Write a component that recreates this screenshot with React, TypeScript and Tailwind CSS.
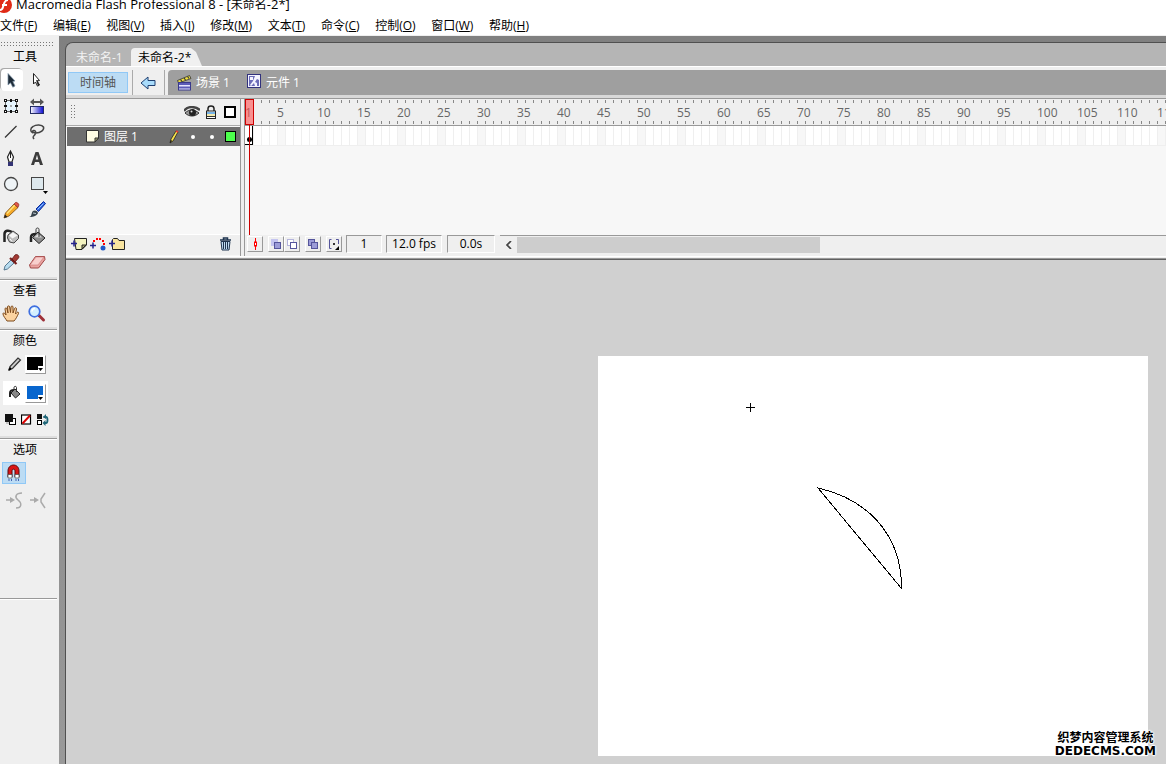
import React, { useState } from 'react';

const MENUS = [
  ['文件', 'F'],
  ['编辑', 'E'],
  ['视图', 'V'],
  ['插入', 'I'],
  ['修改', 'M'],
  ['文本', 'T'],
  ['命令', 'C'],
  ['控制', 'O'],
  ['窗口', 'W'],
  ['帮助', 'H'],
];

// Frames are 8px wide, the timeline starts after the toolbox and the layer list
const FRAME_COUNT = Math.ceil((window.innerWidth - 245) / 8);
const FRAMES = Array.from({ length: FRAME_COUNT }, (_, i) => i + 1);

interface Tool {
  name: string;
  icon: React.ReactNode;
}

const TOOLS: Tool[] = [
  {
    name: '选择工具',
    icon: <path d="M7 4.500l7 7.500-2.200.4L14 17l-2.200 1.200-2.300-4.400L7 16z" fill="#1f2c38" stroke="#7c93a8" strokeWidth=".7" />,
  },
  {
    name: '部分选取工具',
    icon: (
      <>
        <path d="M6.500 4.500l6 7-2.300.5 2.300 4-2 1.200-2-4.200-2 2z" fill="#fff" stroke="#222" />
        <path d="M9 11l3 .8-1.600.4 2.100 3.800-1.500 1z" fill="#222" />
      </>
    ),
  },
  {
    name: '任意变形工具',
    icon: (
      <>
        <rect x="4.500" y="5.500" width="11" height="11" fill="#e6f4fd" stroke="#666" />
        <path
          d="M3 4h3v3H3zM9 4h2v3H9zM14 4h3v3h-3zM3 10h3v2H3zM14 10h3v2h-3zM3 15h3v3H3zM9 15h2v3H9zM14 15h3v3h-3z"
          fill="#111"
        />
        <path d="M4 5h1v1H4zM15 5h1v1h-1zM4 16h1v1H4zM15 16h1v1h-1z" fill="#fff" />
        <path d="M9 10h2v2H9z" fill="#aaa" />
      </>
    ),
  },
  {
    name: '填充变形工具',
    icon: (
      <>
        <defs>
          <linearGradient id="fillBar">
            <stop offset="0" stopColor="#fff" />
            <stop offset="1" stopColor="#0a0ad0" />
          </linearGradient>
        </defs>
        <path d="M3 7l4-3.500V6h6V3.500L17 7l-4 3.500V8H7v2.500z" fill="#555" />
        <rect x="3.500" y="11.500" width="13" height="7" fill="url(#fillBar)" stroke="#222a66" />
      </>
    ),
  },
  { name: '线条工具', icon: <path d="M4 16.500L15.500 5" stroke="#333" strokeWidth="1.300" /> },
  {
    name: '套索工具',
    icon: (
      <path
        d="M6 12C3 11 3 7 6 5.500 9 3.500 15 3.500 16.500 6c1 3-3 6-7.500 6-3 0-4.500-2-2.500-2.500s3 2 1.500 4-3 2-1 4.500"
        fill="none"
        stroke="#444"
        strokeWidth="1.500"
      />
    ),
  },
  {
    name: '钢笔工具',
    icon: (
      <>
        <path d="M9.500 4L6.500 10l1.500 5h3l1.500-5z" fill="#fff" stroke="#222" strokeWidth="1.200" />
        <path d="M9.500 4v7" stroke="#222" />
        <rect x="7" y="15" width="5" height="4" fill="#343474" />
      </>
    ),
  },
  {
    name: '文本工具',
    icon: <path d="M4 18L8.500 5h3L16 18h-3l-1-3H8l-1 3zM8.700 12.500h2.600L10 8z" fill="#3c3c3c" fillRule="evenodd" />,
  },
  { name: '椭圆工具', icon: <circle cx="10" cy="11" r="6.500" fill="#eef3f6" stroke="#444" strokeWidth="1.300" /> },
  {
    name: '矩形工具',
    icon: (
      <>
        <rect x="4.500" y="4.500" width="12" height="12" fill="#dde8ed" stroke="#444" />
        <path d="M16 18h5l-2.500 3z" fill="#000" />
      </>
    ),
  },
  {
    name: '铅笔工具',
    icon: (
      <>
        <path d="M3 19l1.500-5L13 5l4 3.500L8 17z" fill="#f5a927" stroke="#7a4a10" strokeWidth=".8" />
        <path d="M6 14.500l8-8.500" stroke="#ffe27a" strokeWidth="1.500" />
        <path d="M13 5l1.500-1.500c1-.8 4 1.500 3.300 2.700L17 8.500z" fill="#e2574a" stroke="#8a2a20" strokeWidth=".7" />
        <path d="M3 19l1-3.500 2.500 2.500z" fill="#222" />
      </>
    ),
  },
  {
    name: '刷子工具',
    icon: (
      <>
        <path d="M9 10l7.500-7.500 2 2L11.500 12.500z" fill="#2b66e0" stroke="#0c2b99" />
        <path d="M10.500 10.500l6-6" stroke="#9cc4ff" />
        <path d="M2 18c3 0 2-4 4-6 2-1.500 5 0 5 2-1 3-6 4.500-9 4z" fill="#37434d" />
        <path d="M6 14l3 .5" stroke="#b8c4cc" />
      </>
    ),
  },
  {
    name: '墨水瓶工具',
    icon: (
      <>
        <path d="M3.500 17V9C3.500 5 8 5 11 7" fill="none" stroke="#222" strokeWidth="2.500" />
        <path d="M7 10l5-4 5.500 4v3.500L13 18l-4.500-1-2-4z" fill="#bdbdbd" stroke="#444" />
        <path d="M8 10.500l4-3 4.500 3-5 3z" fill="#f5f5f5" />
        <path d="M9 14l2 2.500" stroke="#fff" />
      </>
    ),
  },
  {
    name: '颜料桶工具',
    icon: (
      <>
        <path d="M4 17v-5c0-2 2-3 5-3" fill="none" stroke="#222" strokeWidth="2.500" />
        <path d="M5.500 12.500L11 7l7 6-6 5.500z" fill="#8f8f8f" stroke="#222" />
        <path d="M7.500 12.300L11 9l4 3.500z" fill="#ddd" />
        <path d="M9 9V4.500c0-2 3-2 3 0V12" fill="none" stroke="#333" />
      </>
    ),
  },
  {
    name: '滴管工具',
    icon: (
      <>
        <path d="M3 19l1-4 6-6 3 3-6.500 6z" fill="#b7dcef" stroke="#4a6c86" strokeWidth=".9" />
        <path d="M9 7l6.500 6" stroke="#7a1f1c" strokeWidth="2.200" />
        <path d="M11 8l3-4c2-1.500 5 1 3.500 3L14 11z" fill="#a33a34" stroke="#5c1512" strokeWidth=".8" />
      </>
    ),
  },
  {
    name: '橡皮擦工具',
    icon: (
      <>
        <path d="M2.500 14l6-8.500h9l.5 3-6.500 8.500h-8z" fill="#e9a3a0" stroke="#a04848" />
        <path d="M3 14l6-8h8l-6 8z" fill="#f8cfcd" stroke="#c77" strokeWidth=".6" />
      </>
    ),
  },
];

function Separator() {
  return (
    <div className="w-[57px]">
      <div className="h-0.5 bg-[#dedede]" />
      <div className="h-px bg-[#999]" />
      <div className="h-px bg-white" />
    </div>
  );
}

function ToolIcon({ children }: { children: React.ReactNode }) {
  return (
    <svg width="22" height="22" viewBox="0 0 22 22" fill="none">
      {children}
    </svg>
  );
}

function Swatch({ label, color }: { label: string; color: string }) {
  return (
    <button aria-label={label} className="h-[19px] w-[21px] border border-t-white border-l-white border-r-[#999] border-b-[#999]">
      <svg width="19" height="17" viewBox="0 0 19 17">
        <rect width="19" height="17" fill="#fff" />
        <rect x="1" y="1" width="16" height="13" fill={color} />
        <path d="M12 10h7v7h-7z" fill="#fff" />
        <path d="M12 12h5l-2.500 3z" fill="#000" />
      </svg>
    </button>
  );
}

function Toolbox() {
  const [tool, setTool] = useState('选择工具');

  return (
    <aside className="flex w-[59px] shrink-0 flex-col bg-[#efefef]">
      <div className="mt-[5px] h-[5px] w-[54px] bg-[radial-gradient(#777_35%,transparent_40%)] bg-[length:3px_3px]" />
      <h2 className="w-[50px] pt-[2px] pb-px text-center leading-[18px]">工具</h2>
      <div className="grid w-[52px] grid-cols-2 pl-px">
        {TOOLS.map(({ name, icon }) => (
          <button
            key={name}
            aria-label={name}
            onClick={() => setTool(name)}
            className={`my-0.5 h-[22px] w-[22px] ${tool === name ? 'rounded-sm bg-white shadow-[-1px_-1px_0_#aaa]' : ''}`}
          >
            <ToolIcon>{icon}</ToolIcon>
          </button>
        ))}
      </div>

      <div className="mt-0.5">
        <Separator />
      </div>
      <h2 className="w-[50px] text-center leading-[20px]">查看</h2>
      <div className="mt-0.5 grid w-[52px] grid-cols-2 pl-px">
        <button aria-label="手形工具" className="h-[22px] w-[22px]">
          <ToolIcon>
            <path
              d="M6 18c-1-2-4-5-4-7s2-1 3 1L4 6c0-1.500 1.700-1.500 2 0l1 4-.5-6c0-1.500 2-1.500 2.200 0L9.500 9.500 10 4c.2-1.500 2-1.300 2 0v6l1.500-4.500c.5-1.300 2.200-.8 2 .5L14.500 11l1.500-1.500c1-1 2 0 1.500 1-1 2-2.500 5.500-4.500 7.500z"
              fill="#fbd3a0"
              stroke="#7d4a1c"
            />
          </ToolIcon>
        </button>
        <button aria-label="缩放工具" className="h-[22px] w-[22px]">
          <ToolIcon>
            <path d="M12 12.500l4.500 4.500" stroke="#9e3038" strokeWidth="3" strokeLinecap="round" />
            <circle cx="7.500" cy="8.500" r="5.300" fill="#d3f0ff" stroke="#3f6fe0" strokeWidth="1.700" />
            <path d="M5 8.500c0-2 1-3 3-3" stroke="#fff" strokeWidth="1.500" />
          </ToolIcon>
        </button>
      </div>

      <div className="mt-0.5">
        <Separator />
      </div>
      <h2 className="w-[50px] text-center leading-[20px]">颜色</h2>
      <div className="mt-px flex h-6 items-center pl-[5px]">
        <svg width="20" height="20" viewBox="0 0 20 20" className="shrink-0">
          <path d="M4 16l1-3.500 8-8.500 2.500 2L7.500 14.500z" fill="#ccc" stroke="#333" strokeWidth="1.200" />
          <path d="M4 16l2-2" stroke="#000" strokeWidth="2" />
        </svg>
        <Swatch label="笔触颜色" color="#000" />
      </div>
      <div className="mt-[5px] ml-[3px] flex h-6 w-[45px] items-center bg-white pl-0.5">
        <svg width="20" height="20" viewBox="0 0 20 20" className="shrink-0">
          <path d="M5 14v-4c0-2 2-3 4-3" fill="none" stroke="#222" strokeWidth="2" />
          <path d="M6 10l4-4 5 5-4.500 4z" fill="#888" stroke="#222" />
          <path d="M9 7V4.500c0-1.500 2.500-1.500 2.500 0V9" fill="none" stroke="#333" />
        </svg>
        <Swatch label="填充颜色" color="#0866ce" />
      </div>
      <div className="mt-[7px] flex h-4 items-center gap-1 pl-[5px]">
        <button aria-label="黑白" className="h-3 w-3">
          <svg width="12" height="12" viewBox="0 0 12 12">
            <rect x="4.500" y="4.500" width="6" height="6" fill="#fff" stroke="#000" />
            <rect width="8" height="8" fill="#111" />
            <path d="M1 9h3" stroke="#999" />
          </svg>
        </button>
        <button aria-label="没有颜色" className="h-3 w-3">
          <svg width="12" height="12" viewBox="0 0 12 12">
            <rect x=".5" y="1" width="9" height="9" fill="#fff" stroke="#000" strokeWidth="1.200" />
            <path d="M1.500 9.500L9 1.500" stroke="#d00" strokeWidth="2" />
          </svg>
        </button>
        <button aria-label="交换颜色" className="h-3 w-3">
          <svg width="12" height="12" viewBox="0 0 12 12">
            <rect width="5" height="5" fill="#111" />
            <rect x=".5" y="6.500" width="4" height="4" fill="#fff" stroke="#000" />
            <path d="M6.500 3H9c2 0 2 6 0 6H7" fill="none" stroke="#1f6678" strokeWidth="1.800" />
            <path d="M6 3l3-3v5zM5.500 9l3-3v6z" fill="#1f6678" />
          </svg>
        </button>
      </div>

      <div className="mt-2">
        <Separator />
      </div>
      <h2 className="w-[50px] text-center leading-[20px]">选项</h2>
      <button aria-label="贴紧至对象" className="mt-[2px] ml-[2px] h-[22px] w-6 border border-[#90c8f6] bg-[#bcdcf4]">
        <svg width="22" height="20" viewBox="0 0 22 20">
          <path d="M5 14V8c0-8 11-8 11 0v6h-4V8c0-2.500-3-2.500-3 0v6z" fill="#d81616" stroke="#5c0808" />
          <path d="M5 11.500h4V15H5zM12 11.500h4V15h-4z" fill="#fff" stroke="#444" strokeWidth=".7" />
          <path d="M5.500 17h1M8 17h1M12.500 17h1M15 17h1" stroke="#1c3c9c" strokeWidth="1.500" />
        </svg>
      </button>
      <div className="mt-2 flex gap-2 pl-[6px]">
        <button aria-label="平滑" disabled>
          <svg width="16" height="18" viewBox="0 0 16 18">
            <path d="M0 8h5" stroke="#aaa" strokeWidth="1.500" />
            <path d="M4 5l5 3-5 3z" fill="#aaa" />
            <path d="M16 1c-6 0-8 4-4 7s4 8-2 8" fill="none" stroke="#aaa" strokeWidth="1.500" />
          </svg>
        </button>
        <button aria-label="伸直" disabled>
          <svg width="16" height="18" viewBox="0 0 16 18">
            <path d="M0 8h5" stroke="#aaa" strokeWidth="1.500" />
            <path d="M4 5l5 3-5 3z" fill="#aaa" />
            <path d="M15 1l-4 6v3l4 6" fill="none" stroke="#aaa" strokeWidth="1.500" />
          </svg>
        </button>
      </div>
      <div className="mt-[88px] w-[57px] border-t border-b border-t-[#999] border-b-white" />
    </aside>
  );
}

function TabBar() {
  return (
    <div className="flex h-6 items-end border-b border-white bg-[#b5b5b5]">
      <button className="h-[17px] w-[65px] pl-[10px] text-left leading-[16px] text-[#f3f3f3]">未命名-1</button>
      <button className="h-[18px] w-[71px] rounded-tl-sm bg-[#f0f0f0] pl-[7px] text-left leading-[17px] text-black [clip-path:polygon(0_0,60px_0,65px_4px,71px_100%,0_100%)]">
        未命名-2*
      </button>
    </div>
  );
}

function EditBar() {
  return (
    <div className="flex h-7 bg-[#efefef] pl-[2px] text-[12px]">
      <button className="mt-[5px] h-[21px] w-[60px] border border-[#90c8f6] bg-[#bcdcf4] pt-px text-[#555]">时间轴</button>
      <div className="mt-[3px] ml-1 w-px bg-[#aaa]" />
      <button aria-label="返回" className="w-[31px] pl-[7px]">
        <svg width="17" height="16" viewBox="0 0 17 16" className="mt-[3px]">
          <path d="M1 8l7-6v3.500h7v5H8V14z" fill="#a9dcfb" stroke="#1f3f70" />
        </svg>
      </button>
      <div className="mt-[3px] w-px bg-[#aaa]" />
      <nav className="mt-[3px] ml-[3px] flex flex-1 items-center rounded-tl bg-[#9f9f9f] pl-[9px] text-white">
        <button className="flex items-center gap-1">
          <svg width="15" height="16" viewBox="0 0 15 16">
            <path d="M.5 5.500l12-5 1.500 3L1.500 8z" fill="#f0e040" stroke="#333" strokeWidth=".8" />
            <path d="M3.500 4.500l1.500 2M7 3l1.500 2M10.500 1.500l1.500 2" stroke="#333" strokeWidth="1.200" />
            <rect x="1.500" y="7.500" width="12" height="7.500" fill="#e4e4ff" stroke="#39398c" />
            <path d="M2 9h11M2 12.500h11" stroke="#5c5cb8" strokeWidth="2" />
          </svg>
          <span className="pt-px">场景 1</span>
        </button>
        <button className="ml-[17px] flex items-center gap-1">
          <svg width="15" height="15" viewBox="0 0 15 15" className="-mt-0.5">
            <rect x=".5" y=".5" width="13" height="13" fill="#f4f4ff" stroke="#31317c" />
            <rect x="2" y="2" width="10" height="10" fill="#6c6cb8" />
            <path d="M3 3h3v3H3zM8 2h4v4l-2-1-2 3 2 1v3H8L7 9l-3 3-1-1 3-4z" fill="#f4f4ff" />
          </svg>
          <span className="pt-px">元件 1</span>
        </button>
      </nav>
    </div>
  );
}

function LayerPanel() {
  return (
    <section className="flex w-[175px] shrink-0 flex-col border-r border-[#999] bg-[#f7f7f7]">
      <div className="flex h-[27px] items-center border-b border-[#aaa] bg-[#efefef] pr-px pl-1">
        <div className="h-4 w-[5px] bg-[radial-gradient(#777_35%,transparent_40%)] bg-[length:3px_3px]" />
        <div className="flex-1" />
        <button aria-label="显示/隐藏所有图层" className="flex w-[19px] justify-center">
          <svg width="16" height="12" viewBox="0 0 16 12">
            <path d="M0 5c3-5 11-5 16-1" fill="none" stroke="#444" strokeWidth="2.500" />
            <path d="M1 7c4-4 9-4 14 0-4 4-10 4-14 0z" fill="#999" stroke="#333" />
            <circle cx="8.500" cy="6.500" r="3.500" fill="#222" />
            <circle cx="7.500" cy="5.500" r="1" fill="#ddd" />
          </svg>
        </button>
        <button aria-label="锁定所有图层" className="flex w-[19px] justify-center">
          <svg width="12" height="14" viewBox="0 0 12 14">
            <path d="M3 7V3.500c0-3.500 6-3.500 6 0V7" fill="none" stroke="#222" strokeWidth="1.500" />
            <rect x="1.500" y="6" width="9" height="7.500" fill="#fff" stroke="#222" />
            <path d="M2 8h8" stroke="#4a9be0" strokeWidth="1.500" />
            <path d="M2 10h8" stroke="#e8d45a" />
            <path d="M2 11.500h8" stroke="#333" />
          </svg>
        </button>
        <button aria-label="显示所有图层的轮廓" className="flex w-[19px] justify-center">
          <span className="h-3 w-3 border-2 border-black bg-white" />
        </button>
      </div>
      <div className="ml-px h-[108px]">
        <div className="mt-px flex h-[19px] items-center bg-[#6e6e6e] pl-[19px] text-[12px] text-white">
          <svg width="14" height="13" viewBox="0 0 14 13" className="mr-1">
            <path d="M.5.500h12V8L9 12H.500z" fill="#fffde4" stroke="#333" />
            <path d="M12.500 8L9 12V8z" fill="#a8a870" stroke="#333" />
          </svg>
          图层 1
          <div className="flex-1" />
          <svg width="10" height="14" viewBox="0 0 10 14" className="mr-1">
            <path d="M1 13l1-4 5-8 2 1-5 9z" fill="#f7e04b" stroke="#222" strokeWidth=".8" />
            <path d="M1 13l1-3 1 1z" fill="#000" />
            <path d="M7 1l2 1" stroke="#e33" strokeWidth="1.500" />
          </svg>
          <span className="flex w-[19px] justify-center">
            <span className="h-1 w-1 rounded-full bg-white" />
          </span>
          <span className="flex w-[19px] justify-center">
            <span className="h-1 w-1 rounded-full bg-white" />
          </span>
          <span className="flex w-[19px] justify-center">
            <span className="h-[11px] w-[11px] border border-black bg-[#4cff4c]" />
          </span>
        </div>
      </div>
      <div className="flex h-[21px] items-center gap-[3px] border-t border-white bg-[#efefef] px-[5px] pb-[2px]">
        <button aria-label="插入图层">
          <svg width="16" height="14" viewBox="0 0 16 14">
            <path d="M3.500 1.500h12V8L11 12.500H5z" fill="#f2f2c0" stroke="#222" />
            <path d="M15 8l-4 4V8z" fill="#a8a870" stroke="#222" />
            <path d="M0 6.500h6M3 3.500v6" stroke="#23238c" strokeWidth="1.500" />
          </svg>
        </button>
        <button aria-label="添加运动引导层">
          <svg width="16" height="14" viewBox="0 0 16 14">
            <path d="M3 3h2v2H3zM6 1h2v2H6zM9 1h2v2H9zM12 3h2v2h-2zM13 6h2v2h-2z" fill="#f00" />
            <circle cx="13" cy="11" r="2.500" fill="#1d57c8" />
            <path d="M0 8.500h6M3 5.500v6" stroke="#23238c" strokeWidth="1.500" />
          </svg>
        </button>
        <button aria-label="插入图层文件夹">
          <svg width="16" height="14" viewBox="0 0 16 14">
            <path d="M3.500 12.500v-10l1-1h4l1.500 2h5.500v9z" fill="#f8e4a0" stroke="#222" />
            <path d="M0 6.500h6M3 3.500v6" stroke="#23238c" strokeWidth="1.500" />
          </svg>
        </button>
        <div className="flex-1" />
        <button aria-label="删除图层" className="mr-[3px]">
          <svg width="13" height="14" viewBox="0 0 13 14">
            <path d="M1 3h11M4.500 2.500V1h4v1.500" fill="none" stroke="#1f3550" strokeWidth="1.500" />
            <path d="M2 4.500h9l-1 8.500H3z" fill="#c0dcf4" stroke="#1f3550" />
            <path d="M4.500 5v7M6.500 5v7M8.500 5v7" stroke="#1f3550" />
          </svg>
        </button>
      </div>
    </section>
  );
}

const controlButton =
  'flex h-4 w-4 shrink-0 items-center justify-center border border-t-white border-l-white border-r-[#999] border-b-[#999]';
const controlField =
  'h-[18px] shrink-0 border border-t-[#999] border-l-[#999] border-r-white border-b-white bg-[#efefef] text-center text-[12px] text-black';

function FrameControls() {
  return (
    <div className="flex h-[21px] items-start bg-[#efefef] pl-[2px]">
      <div className="flex shrink-0 pt-px">
        <button aria-label="滚动到播放头" className={controlButton}>
          <svg width="14" height="14" viewBox="0 0 14 14">
            <path d="M7.500 1v12" stroke="#f00" />
            <rect x="6.500" y="5" width="2" height="4" fill="#fff" stroke="#f00" />
          </svg>
        </button>
        <button aria-label="绘图纸外观" className={`${controlButton} ml-[5px]`}>
          <svg width="14" height="14" viewBox="0 0 14 14">
            <rect x="2" y="2" width="7" height="7" fill="#c4c4f0" />
            <rect x="5.500" y="5.500" width="6" height="6" fill="#9c9cd8" stroke="#55559c" />
          </svg>
        </button>
        <button aria-label="绘图纸外观轮廓" className={controlButton}>
          <svg width="14" height="14" viewBox="0 0 14 14">
            <rect x="2.500" y="2.500" width="6" height="6" fill="#fff" stroke="#b4b4dc" />
            <rect x="5.500" y="5.500" width="6" height="6" fill="#fff" stroke="#55559c" />
          </svg>
        </button>
        <button aria-label="编辑多个帧" className={`${controlButton} ml-[5px]`}>
          <svg width="14" height="14" viewBox="0 0 14 14">
            <rect x="2.500" y="2.500" width="6" height="6" fill="#9c9cd8" stroke="#55559c" />
            <rect x="5.500" y="5.500" width="6" height="6" fill="#9c9cd8" stroke="#55559c" />
          </svg>
        </button>
        <button aria-label="修改绘图纸标记" className={`${controlButton} ml-[5px]`}>
          <svg width="14" height="14" viewBox="0 0 14 14">
            <path d="M4.500 2.500h-2v9h2M9 2.500h2.500V7" fill="none" stroke="#55559c" />
            <rect x="6" y="6" width="2" height="2" fill="#333" />
            <path d="M12 9v4H8z" fill="#000" />
          </svg>
        </button>
      </div>
      <input aria-label="当前帧" readOnly value="1" className={`${controlField} ml-1 w-9`} />
      <input aria-label="帧频率" readOnly value="12.0 fps" className={`${controlField} ml-1 w-14`} />
      <input aria-label="运行时间" readOnly value="0.0s" className={`${controlField} ml-[5px] w-12`} />
      <div className="ml-[5px] flex h-[18px] min-w-0 flex-1 border-t border-[#999] pt-px">
        <button aria-label="向左滚动" className="flex w-[17px] shrink-0 items-center justify-center">
          <svg width="8" height="8" viewBox="0 0 8 8">
            <path d="M6 0L2 4l4 4" fill="none" stroke="#444" strokeWidth="1.700" />
          </svg>
        </button>
        <div className="h-4 w-[303px] bg-[#cdcdcd]" />
      </div>
    </div>
  );
}

function Frames() {
  return (
    <section className="relative flex min-w-0 flex-1 flex-col">
      <div className="flex h-[27px] overflow-hidden border-b border-[#999] bg-[#efefef] text-[12px] text-[#666]">
        {FRAMES.map(n => (
          <div key={n} className="flex w-2 shrink-0 flex-col justify-between py-px">
            <div className="h-[3px] w-px bg-[#888]" />
            <div className="pt-[2px] leading-[16px] whitespace-nowrap">{n === 1 || n % 5 === 0 ? n : ''}</div>
            <div className="h-[3px] w-px bg-[#888]" />
          </div>
        ))}
      </div>
      <div className="h-[109px] overflow-hidden bg-[#f7f7f7]">
        <div className="flex h-5 border-b border-[#efefef]">
          <div className="flex w-2 shrink-0 items-end justify-center border-r border-b border-black bg-[radial-gradient(#bbb_35%,#fff_40%)] bg-[length:2px_2px] pb-[2px] pl-px">
            <div className="h-[5px] w-[5px] rounded-full bg-black" />
          </div>
          {FRAMES.slice(1).map(n => (
            <div key={n} className={`w-2 shrink-0 border-l border-[#efefef] ${n % 5 === 0 ? 'bg-[#f7f7f7]' : 'bg-white'}`} />
          ))}
        </div>
      </div>
      <FrameControls />
      {/* Playhead */}
      <div className="absolute top-0 left-0 flex w-[9px] flex-col items-center">
        <div className="h-[26px] w-full border border-[#c00] bg-[#ff5050]/60" />
        <div className="h-[110px] w-px bg-[#c00]" />
      </div>
    </section>
  );
}

function Stage() {
  return (
    <main className="relative flex min-h-0 flex-1 items-end justify-end overflow-hidden bg-[#d0d0d0] pr-[18px] pb-2">
      <svg width="550" height="400" viewBox="0 0 550 400" className="shrink-0 bg-white" shapeRendering="crispEdges">
        <path d="M148 51.500h9M152.500 47v9" stroke="#000" />
        <path d="M220 132C265 142 304 175 303.500 232.500Z" fill="none" stroke="#000" />
      </svg>
      <div className="absolute right-[10px] bottom-[7px] flex flex-col items-center font-bold text-black [text-shadow:1px_0_1px_#fff,-1px_0_1px_#fff,0_1px_1px_#fff,0_-1px_1px_#fff,0_0_3px_#fff]">
        <div className="text-[12px] leading-[14px]">织梦内容管理系统</div>
        <div className="font-['DejaVu_Sans',sans-serif] text-[12px] leading-[12px]">DEDECMS.COM</div>
      </div>
    </main>
  );
}

export default function App() {
  return (
    <div className="flex h-screen flex-col overflow-hidden bg-white font-['Open_Sans','Noto_Sans_CJK_SC',sans-serif] text-[12px] text-black">
      <header className="border-b border-[#efefef]">
        <div className="flex h-[10px] items-center gap-1">
          <svg width="12" height="18" viewBox="0 0 12 18" className="shrink-0">
            <circle cx="4" cy="9" r="8" fill="#e02a16" />
            <path d="M8 4C4 4 4 8 3 11c-.5 2-1 3-3 3M2 9h5" fill="none" stroke="#fff" strokeWidth="2" />
          </svg>
          <h1 className="text-[13px] whitespace-nowrap">
            Macromedia Flash Professional 8 - [<span className="text-[12px]">未命名</span>-2*]
          </h1>
        </div>
        <nav className="flex h-[25px] w-[529px] items-center justify-between pt-[6px]">
          {MENUS.map(([label, key]) => (
            <button key={key} className="shrink-0 whitespace-nowrap">
              {label}(<u>{key}</u>)
            </button>
          ))}
        </nav>
      </header>

      <div className="flex min-h-0 flex-1">
        <Toolbox />
        <div className="flex min-w-0 flex-1 bg-gradient-to-b from-[#808080] to-[#999] pt-[6px] pl-[6px]">
          <div className="flex min-w-0 flex-1 flex-col overflow-hidden rounded-tl-lg border-t border-l border-[#505050]">
            <TabBar />
            <EditBar />
            <div className="h-[3px] shrink-0 bg-[#d8d8d8]" />
            <div className="flex shrink-0 border-t border-[#999]">
              <LayerPanel />
              <div className="w-1 shrink-0 border-r border-[#999] bg-[#efefef]" />
              <Frames />
            </div>
            <div className="h-px shrink-0 bg-white" />
            <div className="h-px shrink-0 bg-[#efefef]" />
            <div className="h-0.5 shrink-0 border-t border-[#999] bg-[#606060]" />
            <Stage />
          </div>
        </div>
      </div>
    </div>
  );
}
